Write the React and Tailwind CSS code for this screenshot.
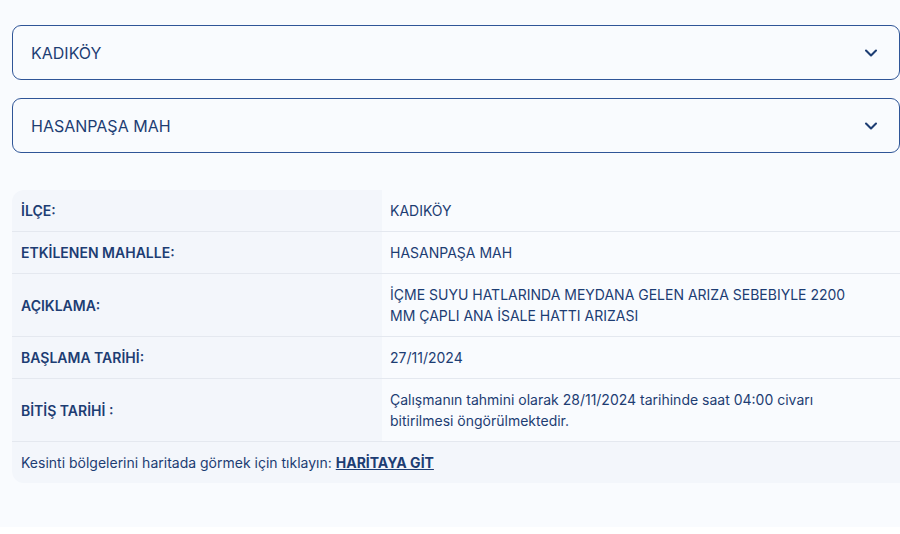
import { ChevronDown } from 'lucide-react';

const rows = [
  { label: 'İLÇE:', value: 'KADIKÖY' },
  { label: 'ETKİLENEN MAHALLE:', value: 'HASANPAŞA MAH' },
  { label: 'AÇIKLAMA:', value: 'İÇME SUYU HATLARINDA MEYDANA GELEN ARIZA SEBEBIYLE 2200 MM ÇAPLI ANA İSALE HATTI ARIZASI' },
  { label: 'BAŞLAMA TARİHİ:', value: '27/11/2024' },
  { label: 'BİTİŞ TARİHİ :', value: 'Çalışmanın tahmini olarak 28/11/2024 tarihinde saat 04:00 civarı bitirilmesi öngörülmektedir.' },
];

function Select({ value }) {
  return (
    <div className="h-[55px] border border-[#2f5597] rounded-[9px] flex items-center justify-between pl-[18px] pr-[18px]">
      <span className="text-[16px] text-[#1d3d73]">{value}</span>
      <ChevronDown size={20} strokeWidth={2.5} className="text-[#1d3d73]" />
    </div>
  );
}

export default function App() {
  return (
    <div className="bg-white w-[900px] h-[534px] overflow-hidden" style={{ fontFamily: 'Inter, "Noto Sans", sans-serif' }}>
      <div className="bg-[#f9fbfe] h-[527px] pt-[25px] pl-[12px]">
        <div className="flex flex-col gap-[18px]">
          <Select value="KADIKÖY" />
          <Select value="HASANPAŞA MAH" />
        </div>
        <div className="mt-[37px] rounded-[12px] overflow-hidden bg-[#f3f6fb] w-[900px]">
          {rows.map((r, i) => (
            <div key={r.label} className={`flex ${i > 0 ? 'border-t border-[#e4e8ef]' : ''}`}>
              <div className="w-[370px] shrink-0 flex items-center px-[9px] py-[10px] text-[14px] leading-[21px] font-semibold text-[#1d3d73]">
                {r.label}
              </div>
              <div className="flex-1 bg-[#f9fbfe] flex items-center pl-[8px] py-[10px] text-[14px] leading-[21px] text-[#1d3d73]">
                <span className="max-w-[475px]">{r.value}</span>
              </div>
            </div>
          ))}
          <div className="border-t border-[#e4e8ef] px-[9px] py-[10px] text-[14px] leading-[21px] text-[#1d3d73]">
            Kesinti bölgelerini haritada görmek için tıklayın:{' '}
            <a className="font-bold underline">HARİTAYA GİT</a>
          </div>
        </div>
      </div>
    </div>
  );
}
